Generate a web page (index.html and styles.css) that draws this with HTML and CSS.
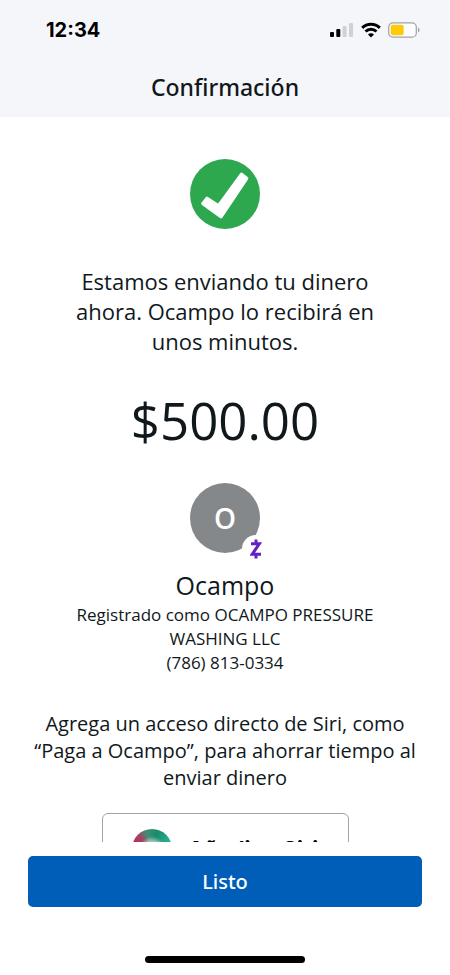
FILE: index.html
```html
<!DOCTYPE html>
<html lang="es">
<head>
<meta charset="utf-8">
<meta name="viewport" content="width=device-width, initial-scale=1">
<title>Confirmación</title>
<link rel="stylesheet" href="styles.css">
</head>
<body>
<div class="app">
  <header class="header">
    <div class="status">
      <span class="time">12:34</span>
      <div class="indicators">
        <svg width="24" height="16" viewBox="0 0 24 16" aria-hidden="true">
          <rect x="0" y="10" width="4" height="5" rx="1" fill="#000"/>
          <rect x="6.300" y="7" width="4" height="8" rx="1" fill="#000"/>
          <rect x="12.600" y="4" width="4" height="11" rx="1" fill="#d0d1d4"/>
          <rect x="19" y="1" width="4" height="14" rx="1" fill="#d0d1d4"/>
        </svg>
        <svg width="20" height="16" viewBox="0 0 20 16" aria-hidden="true">
          <g fill="none" stroke="#000" stroke-width="2.900">
            <path d="M1.200 5.900 A12.600 12.600 0 0 1 18.800 5.900"/>
            <path d="M4.500 9.500 A8 8 0 0 1 15.500 9.500"/>
          </g>
          <path d="M10 15.500 L7 12.500 A4.200 4.200 0 0 1 13 12.500 Z" fill="#000"/>
        </svg>
        <svg width="32" height="16" viewBox="0 0 32 16" aria-hidden="true">
          <rect x=".7" y=".8" width="27.600" height="14.400" rx="4.300" fill="#fdfdff" stroke="#a1a2a6" stroke-width="1.200"/>
          <rect x="2.700" y="2.800" width="13" height="10.400" rx="2.300" fill="#fdcb0a"/>
          <path d="M30 5.500 C32 6.300 32 9.700 30 10.500 Z" fill="#a1a2a6"/>
        </svg>
      </div>
    </div>
    <h1 class="title">Confirmación</h1>
  </header>
  <main class="content">
    <svg class="check" width="70" height="70" viewBox="0 0 70 70" aria-hidden="true">
      <circle cx="35" cy="35" r="35" fill="#2ea84f"/>
      <path d="M13 44.500 L17 39.500 L28.500 47 L51.500 15.500 L56.500 19.500 L31 57.500 Z" fill="#fff" stroke="#fff" stroke-width="3.600" stroke-linejoin="round"/>
    </svg>
    <p class="message">Estamos enviando tu dinero ahora. Ocampo lo recibirá en unos minutos.</p>
    <p class="amount">$500.00</p>
    <div class="avatar">O
      <span class="badge">
        <svg width="12" height="20" viewBox="0 0 12 20" aria-hidden="true">
          <path d="M1 4.700 H9.400 L2.200 15.300 H11 M6 .5 V4.700 M6 15.300 V19.500" fill="none" stroke="#6420c4" stroke-width="3"/>
        </svg>
      </span>
    </div>
    <h2 class="name">Ocampo</h2>
    <p class="details">Registrado como OCAMPO PRESSURE WASHING LLC<br>(786) 813-0334</p>
    <p class="hint">Agrega un acceso directo de Siri, como “Paga a Ocampo”, para ahorrar tiempo al enviar dinero</p>
    <button class="siri" type="button">
      <span class="orb"></span>
      <span>Añadir a Siri</span>
    </button>
  </main>
  <footer class="footer">
    <button class="done" type="button">Listo</button>
    <div class="home"></div>
  </footer>
</div>
</body>
</html>
```
FILE: styles.css
```css
* {
  box-sizing: border-box;
}

body {
  margin: 0;
  background: #fff;
  color: #10181c;
  font-family: "Open Sans", "Noto Sans", sans-serif;
}

h1, h2, p {
  margin: 0;
  font-weight: 400;
}

button {
  font: inherit;
}

.app {
  display: flex;
  flex-direction: column;
  height: 100vh;
}

.header {
  padding: 18px 30px 14px 46px;
  background: #f5f6fa;
}

.status {
  display: flex;
  align-items: center;
  justify-content: space-between;
  height: 24px;
}

.time {
  color: #000;
  font: 700 20px/24px Inter, sans-serif;
}

.indicators {
  display: flex;
  gap: 7px;
}

.title {
  margin-top: 30px;
  padding-right: 16px;
  font-family: "Noto Sans", sans-serif;
  font-size: 23px;
  font-weight: 500;
  line-height: 31px;
  text-align: center;
}

.content {
  display: flex;
  flex: 1;
  flex-direction: column;
  align-items: center;
  min-height: 0;
  padding: 42px 28px 0;
  overflow-x: hidden;
  overflow-y: auto;
  scrollbar-width: none;
  text-align: center;
}

.content > * {
  flex-shrink: 0;
}

.message {
  max-width: 320px;
  margin-top: 37px;
  font-size: 22px;
  line-height: 30px;
}

.amount {
  margin-top: 30px;
  font-size: 51px;
  line-height: 68px;
}

.avatar {
  position: relative;
  width: 70px;
  height: 70px;
  margin-top: 29px;
  border-radius: 50%;
  background: #85888b;
  color: #fff;
  font-size: 28px;
  font-weight: 600;
  line-height: 70px;
}

.badge {
  position: absolute;
  right: -10px;
  bottom: -10px;
  display: flex;
  align-items: center;
  justify-content: center;
  width: 28px;
  height: 28px;
  border-radius: 50%;
  background: #fff;
}

.name {
  margin-top: 14px;
  font-size: 25px;
  line-height: 36px;
}

.details {
  max-width: 320px;
  font-size: 17px;
  line-height: 24px;
}

.hint {
  max-width: 390px;
  margin-top: 35px;
  font-size: 20px;
  line-height: 27px;
}

.siri {
  display: flex;
  align-items: center;
  justify-content: center;
  gap: 16px;
  width: 247px;
  height: 72px;
  margin-top: 22px;
  border: 1px solid #a3a3a3;
  border-radius: 6px;
  background: #fff;
  color: #000;
  font: 700 22px/26px Inter, sans-serif;
}

.orb {
  width: 40px;
  height: 40px;
  border-radius: 50%;
  background:
    radial-gradient(circle at 50% 50%, #fff 10%, transparent 45%),
    conic-gradient(from 270deg, #c02362, #a83f62 12%, #3f8d76 20%, #1a8b6c 30%, #35bfa0 50%, #3173d8 70%, #c02362);
}

.footer {
  display: flex;
  flex-direction: column;
  align-items: center;
  padding: 14px 28px 12px;
}

.done {
  width: 100%;
  height: 51px;
  border: 0;
  border-radius: 5px;
  background: #005eb8;
  color: #fff;
  font-family: "Noto Sans", sans-serif;
  font-size: 20px;
  font-weight: 500;
}

.home {
  width: 160px;
  height: 7px;
  margin-top: 49px;
  border-radius: 4px;
  background: #000;
}
```
